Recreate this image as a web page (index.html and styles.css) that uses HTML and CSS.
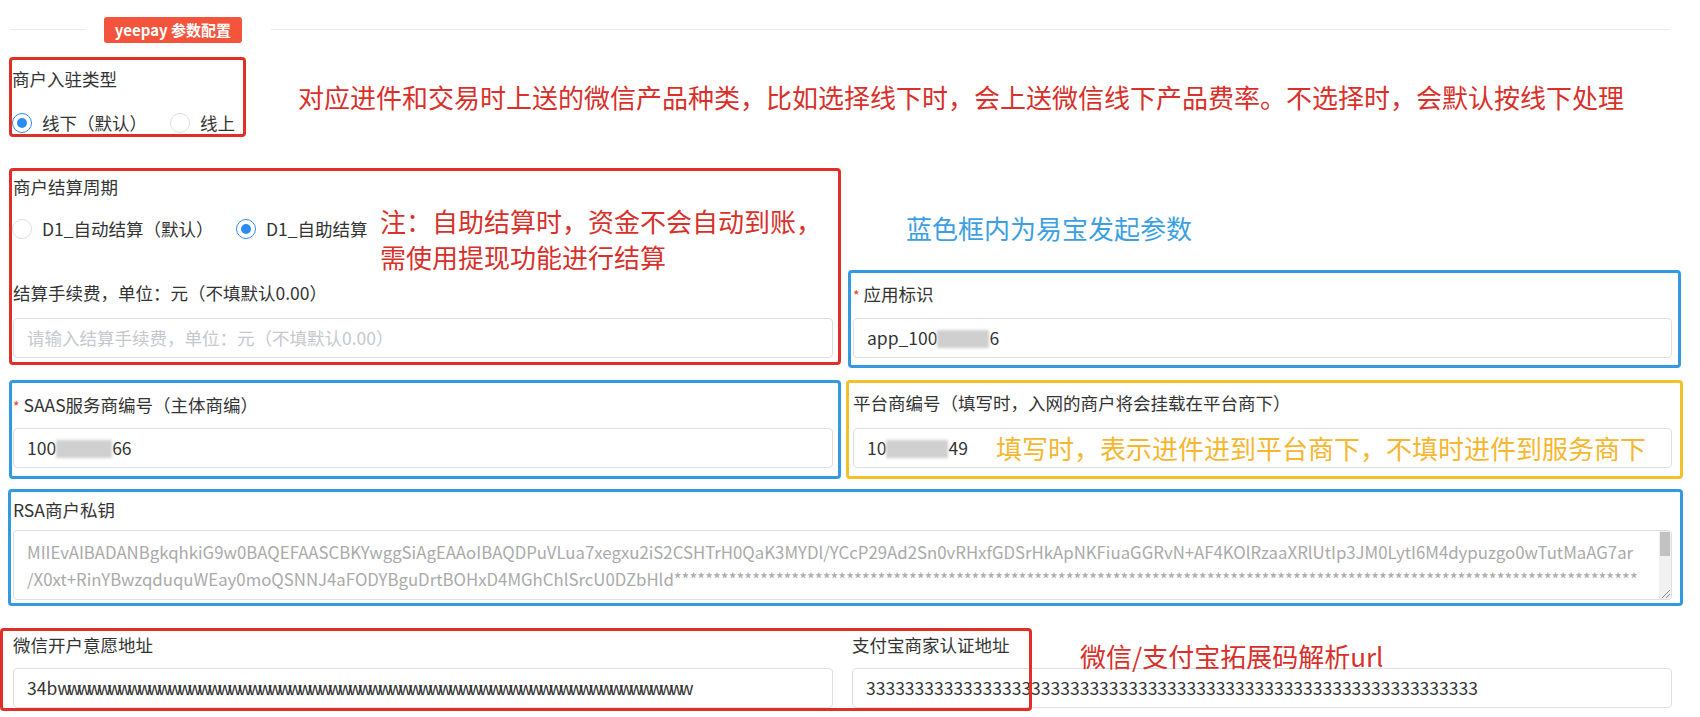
FILE: index.html
```html
<!DOCTYPE html>
<html lang="zh-CN">
<head>
<meta charset="utf-8">
<title>yeepay 参数配置</title>
<link rel="stylesheet" href="styles.css">
</head>
<body>
<div class="page">
  <div class="divider">
    <span class="line line-left"></span>
    <span class="badge">yeepay 参数配置</span>
    <span class="line line-right"></span>
  </div>

  <div class="row row1">
    <div class="box red box1">
      <div class="label">商户入驻类型</div>
      <div class="radios radios1">
        <div class="radio checked r1a"><span class="dot"></span>线下（默认）</div>
        <div class="radio"><span class="dot"></span>线上</div>
      </div>
    </div>
    <div class="note red-text note1">对应进件和交易时上送的微信产品种类，比如选择线下时，会上送微信线下产品费率。不选择时，会默认按线下处理</div>
  </div>

  <div class="row row2">
    <div class="box red box2">
      <div class="label">商户结算周期</div>
      <div class="radio-line">
        <div class="radios radios2">
          <div class="radio r2a"><span class="dot"></span>D1_自动结算（默认）</div>
          <div class="radio checked"><span class="dot"></span>D1_自助结算</div>
        </div>
        <div class="note red-text note2">注：自助结算时，资金不会自动到账，<br>需使用提现功能进行结算</div>
      </div>
      <div class="label fee-label">结算手续费，单位：元（不填默认0.00）</div>
      <div class="input placeholder">请输入结算手续费，单位：元（不填默认0.00）</div>
    </div>
    <div class="col-right">
      <div class="note blue-text">蓝色框内为易宝发起参数</div>
      <div class="box blue box-app">
        <div class="label"><span class="req">*</span>应用标识</div>
        <div class="input">app_100<span class="blur blur-app"></span>6</div>
      </div>
    </div>
  </div>

  <div class="row row3">
    <div class="box blue box-saas">
      <div class="label"><span class="req">*</span>SAAS服务商编号（主体商编）</div>
      <div class="input">100<span class="blur blur-saas"></span>66</div>
    </div>
    <div class="box yellow box-plat">
      <div class="label">平台商编号（填写时，入网的商户将会挂载在平台商下）</div>
      <div class="input">10<span class="blur blur-plat"></span>49<span class="yellow-text">填写时，表示进件进到平台商下，不填时进件到服务商下</span></div>
    </div>
  </div>

  <div class="row row4">
    <div class="box blue box-rsa">
      <div class="label">RSA商户私钥</div>
      <div class="textarea">
        <div class="ta-line">MIIEvAIBADANBgkqhkiG9w0BAQEFAASCBKYwggSiAgEAAoIBAQDPuVLua7xegxu2iS2CSHTrH0QaK3MYDl/YCcP29Ad2Sn0vRHxfGDSrHkApNKFiuaGGRvN+AF4KOlRzaaXRlUtIp3JM0LytI6M4dypuzgo0wTutMaAG7ar</div>
        <div class="ta-line">/X0xt+RinYBwzqduquWEay0moQSNNJ4aFODYBguDrtBOHxD4MGhChlSrcU0DZbHld***************************************************************************************************************************</div>
        <div class="scrollbar"><span class="thumb"></span><span class="resizer"></span></div>
      </div>
    </div>
  </div>

  <div class="row row5">
    <div class="item">
      <div class="label">微信开户意愿地址</div>
      <div class="input">34b<span class="ww">wwwwwwwwwwwwwwwwwwwwwwwwwwwwwwwwwwwwwwwwwwwwwwwwwwwwwwwwwwwwwww</span></div>
    </div>
    <div class="item">
      <div class="label">支付宝商家认证地址</div>
      <div class="input">333333333333333333333333333333333333333333333333333333333333333</div>
    </div>
    <div class="overlay-box"></div>
    <div class="note red-text note5">微信/支付宝拓展码解析url</div>
  </div>
</div>
</body>
</html>
```

FILE: styles.css
```css
* { box-sizing: border-box; }
html, body { margin: 0; padding: 0; background: #fff; }
body {
  width: 1700px;
  height: 717px;
  overflow: hidden;
  font-family: "Noto Sans CJK SC", "Microsoft YaHei", sans-serif;
  font-size: 17.5px;
  color: #333;
}
.page { padding-top: 17px; }

/* divider */
.divider { display: flex; height: 26px; }
.line { height: 1px; background: #e8eaec; margin-top: 12px; }
.line-left { width: 74px; margin-left: 11px; }
.line-right { width: 1398px; margin-left: 29px; }
.badge {
  margin-left: 19px;
  width: 138px;
  height: 26px;
  background: #f4533c;
  color: #fff;
  border-radius: 3px;
  font-size: 15px;
  font-weight: bold;
  line-height: 26px;
  text-align: center;
}

/* generic */
.row { display: flex; align-items: flex-start; }
.box { border: 3px solid; border-radius: 4px; }
.red { border-color: #e02e28; }
.blue { border-color: #3399e0; }
.yellow { border-color: #f4c02a; }
.label { line-height: 24px; height: 24px; white-space: nowrap; }
.req { color: #ed4014; margin-right: 4px; font-size: 14px; }
.note { font-size: 26px; line-height: 36px; white-space: nowrap; }
.red-text { color: #d8312b; }
.blue-text { color: #3d9fe3; }
.yellow-text { color: #f5b630; font-size: 26px; margin-left: 28px; vertical-align: top; line-height: 37px; }

.input {
  height: 40px;
  border: 1px solid #dcdee2;
  border-radius: 4px;
  padding-left: 13px;
  line-height: 38px;
  white-space: nowrap;
  overflow: hidden;
  color: #333;
  background: #fff;
}
.placeholder { color: #c5c8ce; }
.blur {
  display: inline-block;
  height: 18px;
  vertical-align: -3px;
  background: #cfcfcf;
  filter: blur(1.5px);
}
.blur-app { width: 52px; }
.blur-saas { width: 56px; }
.blur-plat { width: 62px; }
.ww { letter-spacing: -4px; }

/* radios */
.radios { display: flex; }
.radio { display: flex; align-items: center; height: 24px; line-height: 24px; white-space: nowrap; }
.dot {
  width: 20px;
  height: 20px;
  border: 1px solid #dcdee2;
  border-radius: 50%;
  margin-right: 10px;
  position: relative;
  background: #fff;
  flex-shrink: 0;
}
.checked .dot { border-color: #2d8cf0; }
.checked .dot::after {
  content: "";
  position: absolute;
  left: 4px;
  top: 4px;
  width: 10px;
  height: 10px;
  border-radius: 50%;
  background: #2d8cf0;
}
.r1a { width: 158px; }
.r2a { width: 224px; }

/* row 1 */
.row1 { margin-top: 14px; padding-left: 9px; align-items: center; }
.box1 { width: 237px; height: 80px; padding: 7px 0 0 0; }
.radios1 { margin-top: 20px; }
.note1 { margin-left: 52px; }

/* row 2 */
.row2 { margin-top: 31px; padding-left: 9px; }
.box2 { width: 832px; height: 197px; padding: 4px 0 0 1px; }
.radio-line { display: flex; margin-top: 4px; height: 72px; }
.radios2 { width: 368px; flex-shrink: 0; margin-top: 14px; margin-left: -1px; }
.fee-label { margin-top: 6px; }
.box2 .input { margin-top: 13px; width: 820px; }
.col-right { margin-left: 7px; }
.col-right .blue-text { margin-top: 42px; padding-left: 58px; }
.box-app { margin-top: 24px; width: 833px; height: 98px; padding: 9px 0 0 2px; }
.box-app .input { margin-top: 12px; width: 819px; }

/* row 3 */
.row3 { margin-top: 12px; padding-left: 9px; gap: 5px; }
.box-saas { width: 832px; height: 99px; padding: 10px 0 0 1px; }
.box-saas .input { margin-top: 11px; width: 820px; }
.box-plat { width: 837px; height: 99px; padding: 8px 0 0 4px; }
.box-plat .input { margin-top: 13px; width: 819px; }

/* row 4 */
.row4 { margin-top: 10px; padding-left: 8px; }
.box-rsa { width: 1675px; height: 117px; padding: 6px 0 0 2px; }
.textarea {
  position: relative;
  margin-top: 8px;
  width: 1659px;
  height: 70px;
  border: 1px solid #dcdee2;
  border-radius: 4px;
  padding: 8px 0 0 13px;
  color: #aaa;
  font-size: 16.8px;
  line-height: 27px;
  overflow: hidden;
}
.ta-line { width: 1630px; white-space: nowrap; overflow: hidden; }
.scrollbar {
  position: absolute;
  right: 0;
  top: 0;
  bottom: 0;
  width: 12px;
  background: #f1f1f1;
}
.thumb {
  position: absolute;
  left: 1px;
  right: 1px;
  top: 1px;
  height: 24px;
  background: #c1c1c1;
}
.resizer {
  position: absolute;
  right: 1px;
  bottom: 1px;
  width: 8px;
  height: 8px;
  background: linear-gradient(135deg, transparent 45%, #888 45%, #888 55%, transparent 55%, transparent 70%, #888 70%, #888 80%, transparent 80%);
}

/* row 5 */
.row5 {
  position: relative;
  margin-top: 27px;
  padding-left: 13px;
  display: grid;
  grid-template-columns: 820px 820px;
  column-gap: 19px;
}
.row5 .input { margin-top: 11px; }
.overlay-box {
  position: absolute;
  left: 0;
  top: -5px;
  width: 1032px;
  height: 83px;
  border: 3px solid #e02e28;
  border-radius: 4px;
  pointer-events: none;
}
.note5 { position: absolute; left: 1080px; top: 5px; }
```
